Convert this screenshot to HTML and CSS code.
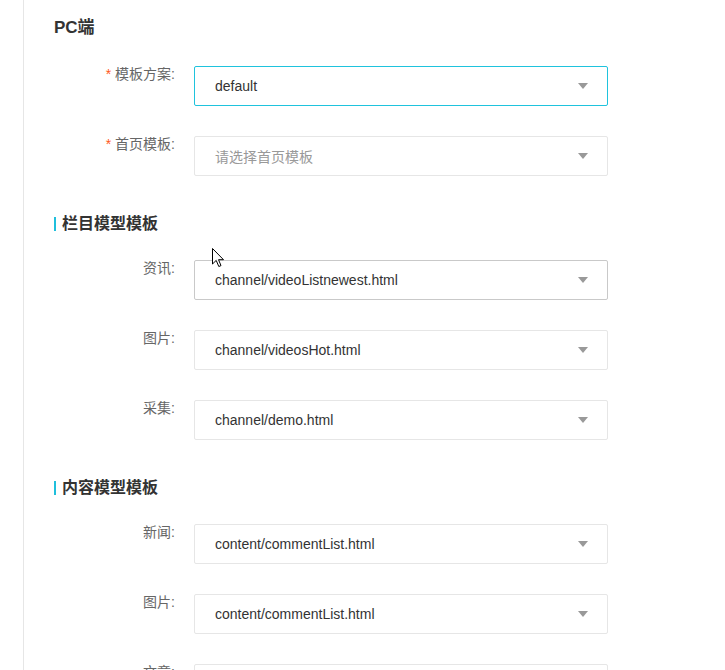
FILE: index.html
```html
<!DOCTYPE html>
<html>
<head>
<meta charset="utf-8">
<link rel="stylesheet" href="styles.css">
</head>
<body>
<div class="page">
  <div class="title">PC端</div>

  <div class="row">
    <div class="label"><span class="req">*</span> 模板方案:</div>
    <div class="select focus"><span class="val">default</span><span class="arrow"></span></div>
  </div>
  <div class="row">
    <div class="label"><span class="req">*</span> 首页模板:</div>
    <div class="select"><span class="val ph">请选择首页模板</span><span class="arrow"></span></div>
  </div>

  <div class="sec"><span class="bar"></span>栏目模型模板</div>
  <div class="row">
    <div class="label">资讯:</div>
    <div class="select hover"><span class="val">channel/videoListnewest.html</span><span class="arrow"></span></div>
  </div>
  <div class="row">
    <div class="label">图片:</div>
    <div class="select"><span class="val">channel/videosHot.html</span><span class="arrow"></span></div>
  </div>
  <div class="row">
    <div class="label">采集:</div>
    <div class="select"><span class="val">channel/demo.html</span><span class="arrow"></span></div>
  </div>

  <div class="sec"><span class="bar"></span>内容模型模板</div>
  <div class="row">
    <div class="label">新闻:</div>
    <div class="select"><span class="val">content/commentList.html</span><span class="arrow"></span></div>
  </div>
  <div class="row">
    <div class="label">图片:</div>
    <div class="select"><span class="val">content/commentList.html</span><span class="arrow"></span></div>
  </div>
  <div class="row">
    <div class="label">文章:</div>
    <div class="select"><span class="val">content/commentList.html</span><span class="arrow"></span></div>
  </div>
</div>
<svg class="cursor" width="13" height="20" viewBox="0 0 13 20"><path d="M0.5 0.5 L0.5 16 L4.2 12.4 L6.8 18.5 L9 17.6 L6.5 11.7 L11.5 11.7 Z" fill="#fff" stroke="#000" stroke-width="1"/></svg>
</body>
</html>
```
FILE: styles.css
```css
html, body {
  margin: 0;
  padding: 0;
  background: #fff;
}
body {
  font-family: "Liberation Sans", "Noto Sans CJK SC", sans-serif;
  font-size: 14px;
  color: #333;
  position: relative;
  height: 670px;
  overflow: hidden;
}
.page {
  margin-left: 23px;
  border-left: 1px solid #e6e6e6;
  padding-left: 30px;
  padding-top: 18px;
  min-height: 800px;
}
.title {
  font-size: 17px;
  font-weight: bold;
  line-height: 20px;
  color: #333;
  margin-bottom: 28px;
}
.sec {
  display: flex;
  align-items: center;
  font-size: 16px;
  font-weight: bold;
  line-height: 20px;
  color: #333;
  margin-top: 38px;
  margin-bottom: 26px;
}
.bar {
  width: 2px;
  height: 14px;
  background: #1fbfdc;
  margin-right: 6px;
}
.row {
  display: flex;
  align-items: flex-start;
  margin-bottom: 30px;
}
.label {
  width: 121px;
  text-align: right;
  margin-right: 19px;
  line-height: 16px;
  color: #666;
}
.req {
  color: #ff5722;
}
.select {
  box-sizing: border-box;
  width: 414px;
  height: 40px;
  border: 1px solid #e6e6e6;
  border-radius: 2px;
  display: flex;
  align-items: center;
  padding-left: 20px;
  padding-right: 19px;
  background: #fff;
}
.select.focus {
  border-color: #1fc3dd;
}
.select.hover {
  border-color: #c9c9c9;
}
.val {
  flex: 1;
  color: #333;
}
.val.ph {
  color: #999;
}
.arrow {
  width: 0;
  height: 0;
  border-left: 5px solid transparent;
  border-right: 5px solid transparent;
  border-top: 6px solid #999;
}
.cursor {
  position: absolute;
  left: 212px;
  top: 248px;
}
```
